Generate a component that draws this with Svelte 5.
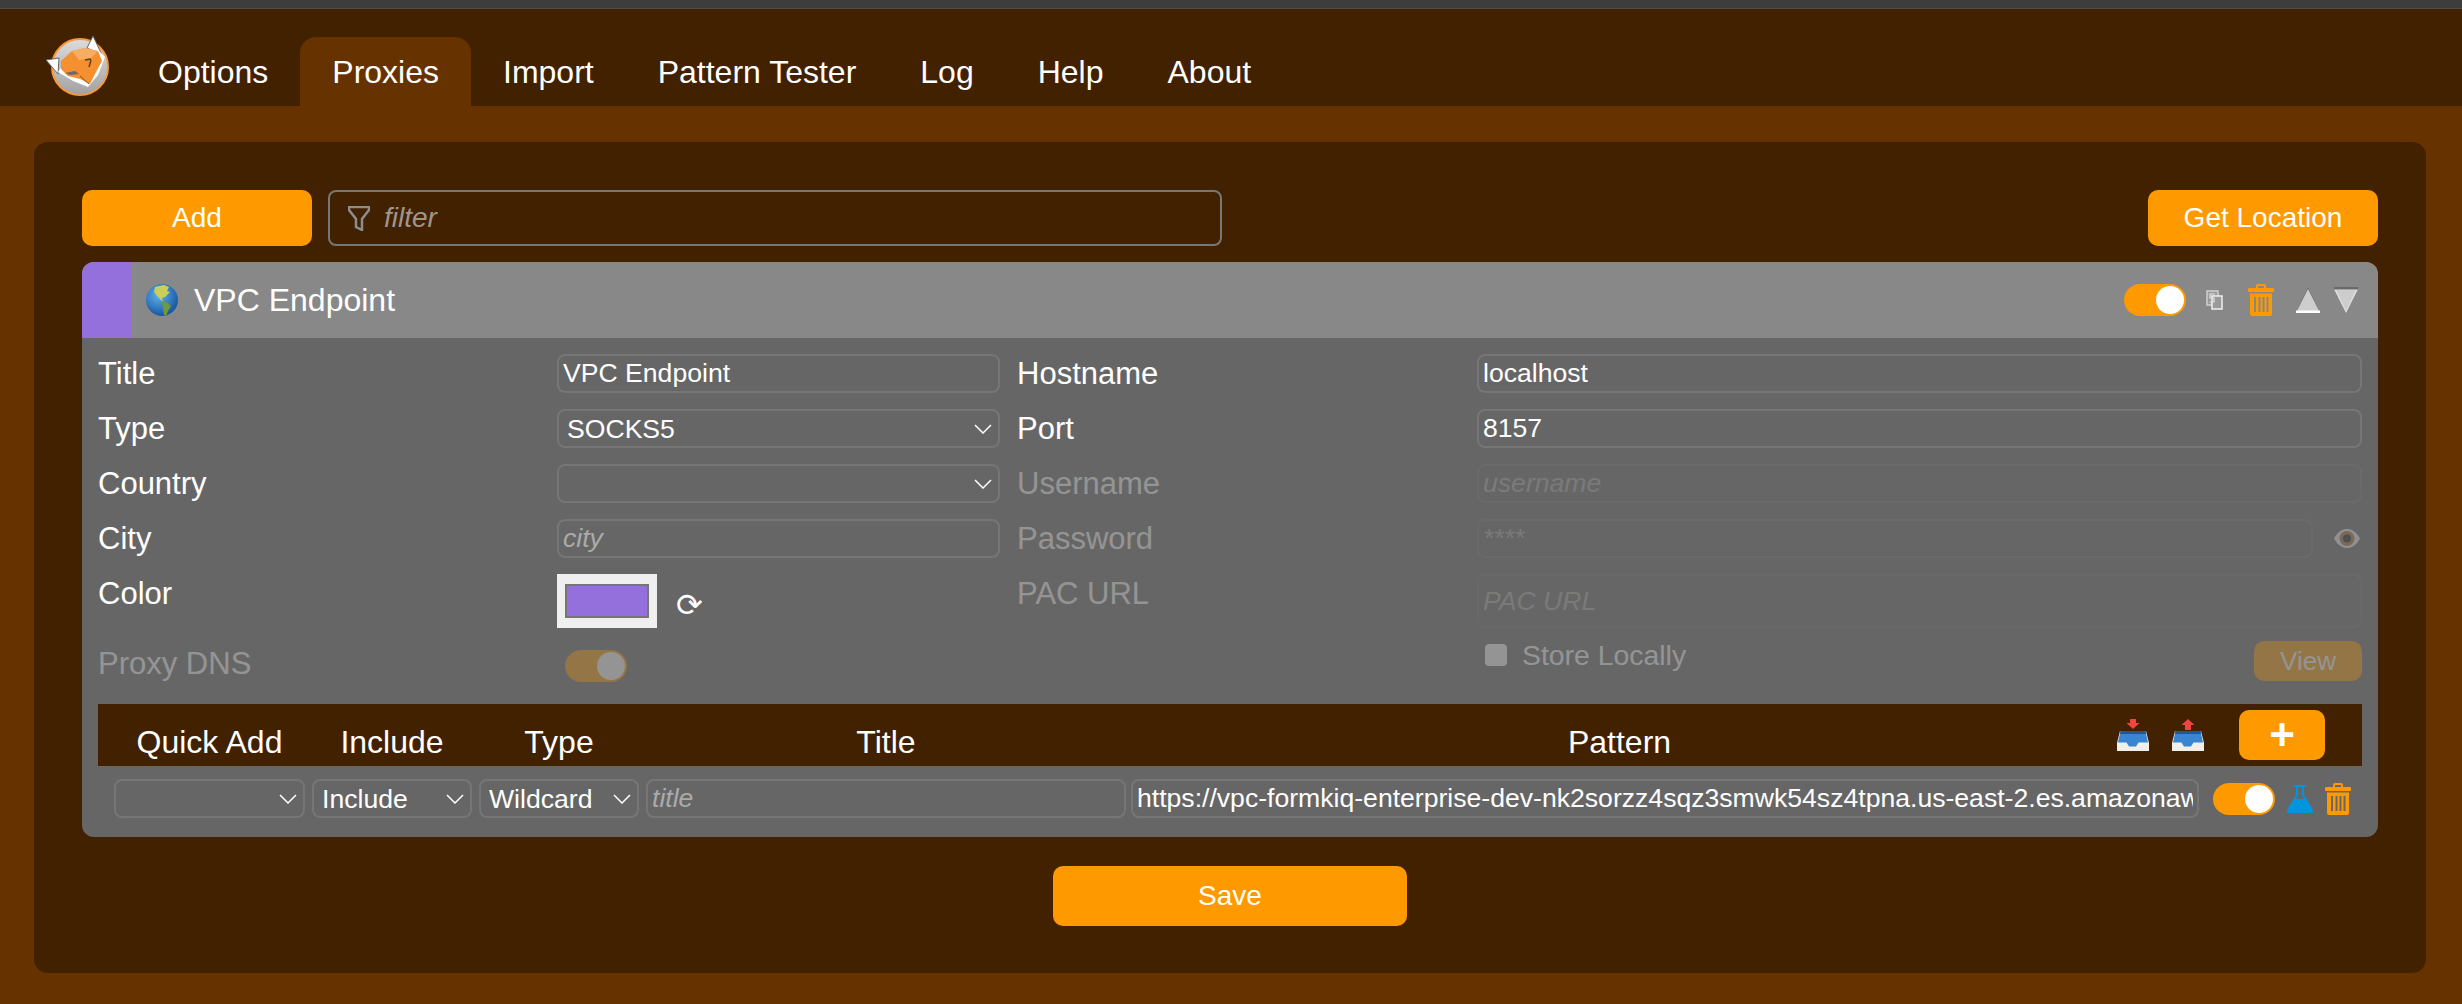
<script>
	const tabs = ['Options', 'Proxies', 'Import', 'Pattern Tester', 'Log', 'Help', 'About'];
	const active = 'Proxies';
	const pattern = 'https://vpc-formkiq-enterprise-dev-nk2sorzz4sqz3smwk54sz4tpna.us-east-2.es.amazonaws.com';
</script>

{#snippet trash()}
	<svg class="trash" viewBox="0 0 26 32" width="26" height="32">
		<path d="M8 5V2a2 2 0 0 1 2-2h6a2 2 0 0 1 2 2v3h-2V2h-6v3z" fill="#f90" />
		<rect x="0" y="4" width="26" height="4" rx="1" fill="#f90" />
		<path
			fill="#f90"
			fill-rule="evenodd"
			d="M2 9.5h22V30a2 2 0 0 1-2 2H4a2 2 0 0 1-2-2zM6 13v15h2V13zM10.500 13v15h2V13zM14.500 13v15h2V13zM18.500 13v15h2V13z"
		/>
	</svg>
{/snippet}

{#snippet chevron()}
	<svg class="chevron" viewBox="0 0 18 10" width="18" height="10">
		<path d="M1 1l8 8 8-8" fill="none" stroke="#fff" stroke-width="1.5" />
	</svg>
{/snippet}

{#snippet tray(up)}
	<svg viewBox="0 0 32 32" width="32" height="32">
		{#if up}
			<path d="M16 0l6.500 6H19v5h-6V6H9.500z" fill="#f0443f" />
		{:else}
			<path d="M13 0h6v4h3.500L16 10 9.500 4H13z" fill="#f0443f" />
		{/if}
		<path d="M3 12h26l3 12v8H0v-8z" fill="#f1efe9" />
		<path d="M3.500 12h25l2.500 11.500h-9.500l-2.500 4h-7l-2.500-4H1z" fill="#3a85d2" />
		<path d="M3.500 12h25l.6 3H2.900z" fill="#26568f" />
	</svg>
{/snippet}

<div class="strip"></div>

<nav class="nav">
	<svg class="logo" viewBox="0 0 64 62" width="64" height="62">
		<defs>
			<linearGradient id="ring" x1="0" y1="0" x2="0" y2="1">
				<stop offset="0" stop-color="#dcdcdc" />
				<stop offset="1" stop-color="#a2a2a2" />
			</linearGradient>
		</defs>
		<circle cx="34" cy="32" r="28" fill="url(#ring)" stroke="#f59a3c" stroke-width="2" />
		<path d="M41 13L47 1l9 19z" fill="#fff" stroke="#666" stroke-width="1" />
		<path d="M0 25l13-2-1 16z" fill="#fff" stroke="#666" stroke-width="1" />
		<path d="M12 37l15 9 15 6 10-12 7-18-7-7-26 1z" fill="#fff" />
		<path d="M15 26l11-10 13-3 13 3 4 10-7 13-5 10-10-5-12-3-7-7z" fill="#f4902f" />
		<path d="M26 16l13-3 13 3-7 7-12 2z" fill="#f8ad62" />
		<path d="M39 25l6-1M45 25l-2 7" stroke="#5b3a1c" stroke-width="1.400" fill="none" />
		<path d="M19 38l10-2 4 3-9 1z" fill="#6a6a6a" />
		<path d="M34 41l9 8" stroke="#8a5520" stroke-width="1" />
	</svg>
	{#each tabs as tab}
		<span class="tab" class:on={tab === active}>{tab}</span>
	{/each}
</nav>

<main class="page">
	<section class="panel">
		<div class="toolbar">
			<button class="btn add">Add</button>
			<div class="filter">
				<svg viewBox="0 0 22 25" width="22" height="25">
					<path d="M1 1h20v3l-7 9v11l-6-3v-8L1 4z" fill="none" stroke="#8d8d8d" stroke-width="2.500" />
				</svg>
				<input placeholder="filter" />
			</div>
			<button class="btn locate">Get Location</button>
		</div>

		<article class="proxy">
			<header class="proxy-head">
				<span class="strip-color"></span>
				<svg class="globe" viewBox="0 0 32 32" width="32" height="32">
					<defs>
						<radialGradient id="sea" cx="0.4" cy="0.35" r="0.7">
							<stop offset="0" stop-color="#5fb2ee" />
							<stop offset="1" stop-color="#14509c" />
						</radialGradient>
					</defs>
					<circle cx="16" cy="16" r="16" fill="url(#sea)" />
					<path d="M9 3l9-2 5 2-2 4 3 1-5 5-3 1 1 4-5-5-4-5z" fill="#c9cf58" />
					<path d="M16 17l6 2 3 3-3 5-2 5-2-1-1-7z" fill="#6f9a3a" />
				</svg>
				<h2>VPC Endpoint</h2>
				<div class="actions">
					<span class="toggle"><span class="knob"></span></span>
					<svg class="copy" viewBox="0 0 17 20" width="17" height="20">
						<rect x="1" y="1" width="11" height="14" fill="#9a9a9a" stroke="#d0d0d0" stroke-width="1.500" />
						<rect x="6" y="6" width="10" height="13" fill="#9a9a9a" stroke="#eee" stroke-width="1.500" />
						<path d="M9 4H4v4h4v4H4" fill="none" stroke="#e4e4e4" stroke-width="1.200" />
					</svg>
					{@render trash()}
					<svg class="arrow" viewBox="0 0 24 26" width="24" height="26">
						<path d="M12 0l12 26H0z" fill="#6f6f6f" />
						<path d="M12 2l11 22H1z" fill="#cdcdcd" />
						<rect x="0" y="23.500" width="24" height="2.500" fill="#fff" />
					</svg>
					<svg class="arrow" viewBox="0 0 24 26" width="24" height="26">
						<path d="M0 2h24L12 26z" fill="#e4e4e4" />
						<path d="M2 3h20L12 24z" fill="#cdcdcd" />
						<rect x="0" y="0" width="24" height="2.500" fill="#6a6a6a" />
					</svg>
				</div>
			</header>

			<div class="proxy-body">
				<div class="fields">
					<span class="label">Title</span>
					<input class="field" value="VPC Endpoint" />
					<span class="label right">Hostname</span>
					<input class="field" value="localhost" />

					<span class="label">Type</span>
					<div class="sel">
						<select class="field">
							<option>SOCKS5</option>
						</select>
						{@render chevron()}
					</div>
					<span class="label right">Port</span>
					<input class="field" value="8157" />

					<span class="label">Country</span>
					<div class="sel">
						<select class="field">
							<option></option>
						</select>
						{@render chevron()}
					</div>
					<span class="label right off">Username</span>
					<input class="field off" placeholder="username" />

					<span class="label">City</span>
					<input class="field" placeholder="city" />
					<span class="label right off">Password</span>
					<div class="pass">
						<input class="field off" placeholder="****" />
						<svg class="eye off" viewBox="0 0 26 19" width="26" height="19">
							<path d="M0 9.500C4 2 9 0 13 0s9 2 13 9.500C22 17 17 19 13 19S4 17 0 9.500z" fill="#f2f2f2" />
							<circle cx="13" cy="9.500" r="7.500" fill="#a9713a" />
							<circle cx="13" cy="9.500" r="4" fill="#1d1d1d" />
						</svg>
					</div>

					<span class="label">Color</span>
					<div class="color-cell">
						<input class="swatch" type="color" value="#9370db" />
						<span class="refresh">⟳</span>
					</div>
					<span class="label right off">PAC URL</span>
					<input class="field tall off" placeholder="PAC URL" />

					<span class="label off">Proxy DNS</span>
					<div class="last"><span class="toggle dns off"><span class="knob"></span></span></div>
					<span class="last"></span>
					<div class="store-row last">
						<label class="store off"><span class="box"></span>Store Locally</label>
						<button class="btn view off">View</button>
					</div>
				</div>

				<div class="pattern-head">
					<span>Quick Add</span>
					<span>Include</span>
					<span>Type</span>
					<span>Title</span>
					<span>Pattern</span>
					<div class="pattern-tools">
						{@render tray(false)}
						{@render tray(true)}
						<button class="btn plus">+</button>
					</div>
				</div>

				<div class="pattern-row">
					<div class="sel">
						<select class="field">
							<option></option>
						</select>
						{@render chevron()}
					</div>
					<div class="sel">
						<select class="field">
							<option>Include</option>
						</select>
						{@render chevron()}
					</div>
					<div class="sel">
						<select class="field">
							<option>Wildcard</option>
						</select>
						{@render chevron()}
					</div>
					<input class="field" placeholder="title" />
					<input class="field wide" value={pattern} />
					<div class="row-tools">
						<span class="toggle"><span class="knob"></span></span>
						<svg viewBox="0 0 26 28" width="26" height="28">
							<path d="M7 1h12" stroke="#0095dd" stroke-width="2" />
							<path d="M10 2v8L1 26h24l-9-16V2" fill="none" stroke="#0095dd" stroke-width="2" />
							<path d="M7 14h12l7 11a2 2 0 0 1-2 3H2a2 2 0 0 1-2-3z" fill="#0095dd" />
						</svg>
						{@render trash()}
					</div>
				</div>
			</div>
		</article>

		<div class="save-row">
			<button class="btn save">Save</button>
		</div>
	</section>
</main>

<style>
	:global(body) {
		margin: 0;
		background: #663300;
		font-family: 'Liberation Sans', Arial, sans-serif;
		color: #fff;
	}

	.strip {
		height: 8px;
		background: #3d3d3d;
		border-bottom: 1px solid #4c4c4c;
	}

	.nav {
		display: flex;
		align-items: flex-end;
		height: 97px;
		background: #412100;
		font-size: 32px;
	}

	.logo {
		margin: 0 16px 9px 46px;
	}

	.tab {
		height: 69px;
		line-height: 70px;
		padding: 0 32px;
		border-radius: 16px 16px 0 0;
	}

	.tab.on {
		background: #663300;
	}

	.page {
		padding: 36px 36px 31px 34px;
	}

	.panel {
		height: 831px;
		box-sizing: border-box;
		padding: 48px 48px 0;
		background: #412100;
		border-radius: 14px;
	}

	.toolbar {
		display: flex;
		gap: 16px;
		height: 56px;
		margin-bottom: 16px;
	}

	.btn {
		border: 0;
		border-radius: 10px;
		background: #f90;
		color: #fff;
		font: inherit;
		font-size: 28px;
		padding: 0;
	}

	.add,
	.locate {
		width: 230px;
	}

	.filter {
		display: flex;
		align-items: center;
		gap: 14px;
		box-sizing: border-box;
		width: 894px;
		padding-left: 18px;
		border: 2px solid #777;
		border-radius: 8px;
	}

	.filter input {
		flex: 1;
		border: 0;
		background: none;
		outline: 0;
		color: #fff;
		font: italic 28px 'Liberation Sans', Arial, sans-serif;
		padding: 0;
	}

	.filter input::placeholder {
		color: #a0958c;
	}

	.locate {
		margin-left: auto;
	}

	.proxy {
		background: #666;
		border-radius: 12px;
		overflow: hidden;
	}

	.proxy-head {
		display: flex;
		align-items: center;
		height: 76px;
		background: #888;
	}

	.strip-color {
		align-self: stretch;
		width: 49px;
		background: #9370db;
	}

	.globe {
		margin: 0 16px 0 15px;
	}

	h2 {
		margin: 0;
		font-size: 32px;
		font-weight: normal;
	}

	.actions {
		display: flex;
		align-items: center;
		margin-left: auto;
		margin-right: 20px;
	}

	.toggle {
		display: inline-flex;
		justify-content: flex-end;
		align-items: center;
		box-sizing: border-box;
		width: 62px;
		height: 32px;
		padding: 2px;
		border-radius: 16px;
		background: #f90;
	}

	.knob {
		width: 28px;
		height: 28px;
		border-radius: 50%;
		background: #fff;
	}

	.copy {
		margin-left: 20px;
	}

	.actions .trash {
		margin-left: 25px;
	}

	.arrow {
		margin-left: 22px;
	}

	.arrow + .arrow {
		margin-left: 14px;
	}

	.proxy-body {
		padding: 16px 16px 19px;
	}

	.fields {
		display: grid;
		grid-template-columns: 459px 443px 477px 1fr;
		grid-template-rows: 39px 39px 39px 39px 54px 40px;
		row-gap: 16px;
		align-items: start;
	}

	.label {
		font-size: 31px;
		line-height: 39px;
	}

	.right {
		padding-left: 17px;
	}

	.off {
		opacity: 0.3;
	}

	.field {
		display: block;
		box-sizing: border-box;
		width: 100%;
		height: 39px;
		margin: 0;
		padding: 0 4px;
		border: 2px solid #767676;
		border-radius: 8px;
		background: #666;
		color: #fff;
		font: 26.6px 'Liberation Sans', Arial, sans-serif;
		outline: 0;
		min-width: 0;
	}

	.field::placeholder {
		color: #aaa;
		font-style: italic;
	}

	select.field {
		appearance: none;
		padding-left: 8px;
	}

	.tall {
		height: 54px;
		border-color: #707070;
	}

	.wide {
		margin-left: -2px;
		width: calc(100% + 2px);
	}

	.sel {
		position: relative;
		min-width: 0;
	}

	.chevron {
		position: absolute;
		right: 8px;
		top: 15px;
		pointer-events: none;
	}

	.pass {
		display: flex;
		align-items: center;
		gap: 21px;
		padding-right: 2px;
	}

	.pass .field {
		flex: 1;
	}

	.color-cell {
		display: flex;
		align-items: flex-end;
		gap: 19px;
	}

	.swatch {
		width: 100px;
		height: 54px;
		box-sizing: border-box;
		margin: 0;
		padding: 10px 8px;
		border: 0;
		background: #efefef;
		appearance: none;
	}

	.swatch::-webkit-color-swatch-wrapper {
		padding: 0;
	}

	.swatch::-webkit-color-swatch {
		border: 2px solid #767676;
	}

	.refresh {
		font-family: 'DejaVu Sans', sans-serif;
		font-size: 32px;
		line-height: 46px;
	}

	.last {
		margin-top: -3px;
	}

	.dns {
		margin: 9px 0 0 8px;
	}

	.store-row {
		display: flex;
		justify-content: space-between;
		padding-left: 8px;
	}

	.store {
		display: flex;
		align-items: center;
		gap: 15px;
		height: 28px;
		font-size: 28.4px;
	}

	.box {
		width: 22px;
		height: 22px;
		border-radius: 4px;
		background: #fff;
	}

	.view {
		width: 108px;
		height: 40px;
		font-size: 26px;
	}

	.pattern-head,
	.pattern-row {
		display: grid;
		grid-template-columns: 191px 160px 160px 480px 1066px 1fr;
		column-gap: 7px;
		align-items: center;
	}

	.pattern-head {
		grid-template-columns: 191px 160px 160px 480px 973px 1fr;
		height: 62px;
		margin-top: 20px;
		padding-left: 16px;
		background: #412100;
		font-size: 32px;
		text-align: center;
	}

	.pattern-head > span {
		padding-top: 14px;
	}

	.pattern-tools {
		display: flex;
		align-items: center;
		justify-content: flex-end;
		padding-right: 37px;
		gap: 23px;
	}

	.plus {
		width: 86px;
		height: 50px;
		margin-left: 12px;
		font-size: 44px;
		font-weight: bold;
		line-height: 44px;
	}

	.pattern-row {
		margin-top: 13px;
		padding-left: 16px;
	}

	.row-tools {
		display: flex;
		align-items: center;
		gap: 12px;
		margin-left: 7px;
	}

	.save-row {
		display: flex;
		justify-content: center;
		margin-top: 29px;
	}

	.save {
		width: 354px;
		height: 60px;
	}
</style>
